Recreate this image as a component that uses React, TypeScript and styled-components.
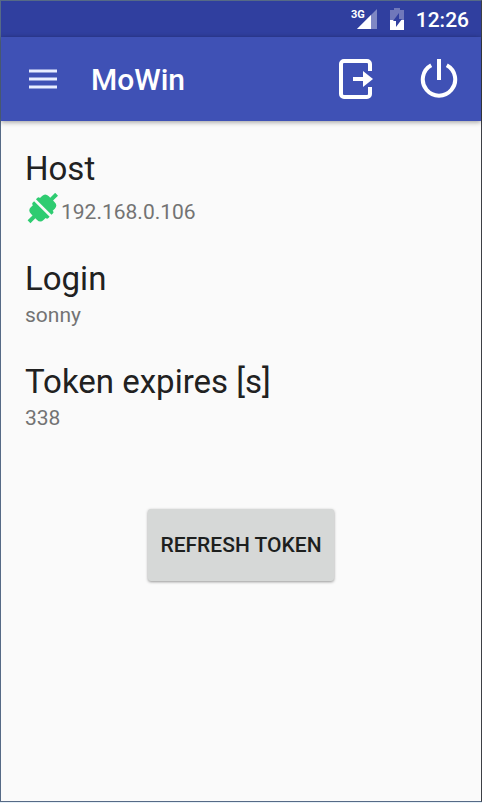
import React from "react";
import styled, { createGlobalStyle } from "styled-components";

const GlobalStyle = createGlobalStyle`
  *, *::before, *::after { box-sizing: border-box; }
  body { margin: 0; background: #e6f0f8; font-family: Roboto, sans-serif; }
`;

const Screen = styled.div`
  display: flex;
  flex-direction: column;
  min-height: calc(100vh - 1px);
  background: #fafafa;
  border: 1px solid #566a86;
  border-right-color: #3d3f45;
`;

const StatusBar = styled.div`
  display: flex;
  align-items: center;
  justify-content: flex-end;
  height: 36px;
  padding-right: 12px;
  background: #303f9f;
  color: #fff;
`;

const Signal = styled.div`
  display: flex;
  align-items: flex-start;
  margin-right: 12px;
`;

const Battery = styled.svg`
  margin-right: 12px;
`;

const Clock = styled.time`
  padding-top: 2px;
  font-size: 21px;
  font-weight: 500;
  line-height: 24px;
`;

const AppBar = styled.header`
  display: flex;
  align-items: center;
  height: 84px;
  padding: 0 14px 0 16px;
  background: #3f51b5;
  color: #fff;
  box-shadow: 0 1px 5px rgba(0, 0, 0, 0.4);
`;

const IconButton = styled.button`
  display: grid;
  place-items: center;
  width: 56px;
  height: 56px;
  padding: 0;
  border: 0;
  background: none;
  color: inherit;
  cursor: pointer;
`;

const MenuButton = styled(IconButton)`
  width: 52px;
`;

const AppTitle = styled.h1`
  flex: 1;
  margin: 0 0 0 22px;
  padding-top: 2px;
  font-size: 30px;
  font-weight: 500;
  line-height: 36px;
`;

const Actions = styled.div`
  display: flex;
  gap: 27px;
`;

const Content = styled.main`
  display: flex;
  flex-direction: column;
  padding: 28px 24px;
`;

const Details = styled.dl`
  display: flex;
  flex-direction: column;
  gap: 35px;
  margin: 0;
`;

const Label = styled.dt`
  color: #212121;
  font-size: 33px;
  line-height: 39px;
`;

const Value = styled.dd`
  display: flex;
  align-items: flex-end;
  gap: 1px;
  margin: 5px 0 0;
  color: #737373;
  font-size: 21px;
  line-height: 24px;
`;

const RefreshButton = styled.button`
  align-self: center;
  height: 72px;
  margin-top: 79px;
  padding: 0 12px;
  border: 0;
  border-radius: 3px;
  background: #d6d8d7;
  color: #1d1f1e;
  font: 500 21px/24px Roboto, sans-serif;
  text-transform: uppercase;
  box-shadow: 0 1px 3px rgba(0, 0, 0, 0.4);
  cursor: pointer;
`;

const SignalIcon = () => (
  <svg width="27" height="22" viewBox="0 0 27 22" role="img" aria-label="3G signal">
    <path d="M6 21 26 1V21Z" fill="#7f88c4" />
    <path d="M6 21 20 7V21Z" fill="#fff" />
    <text x="0" y="10" fill="#fff" fontFamily="Roboto, sans-serif" fontSize="11" fontWeight="700">3G</text>
  </svg>
);

const BatteryIcon = () => (
  <Battery width="14" height="22" viewBox="0 0 14 22" role="img" aria-label="Battery charging">
    <path d="M4 0h6v2h4v20H0V2h4Z" fill="#7078ba" />
    <path d="M0 12h14v10H0Z" fill="#fff" />
    <path d="M9 5 3 13h3v6l6-8H9Z" fill="#303f9f" />
  </Battery>
);

const MenuIcon = () => (
  <svg width="28" height="20" viewBox="0 0 28 20" aria-hidden="true">
    <path d="M0 2h28M0 10h28M0 18h28" stroke="#e8edff" strokeWidth="3" />
  </svg>
);

const LogoutIcon = () => (
  <svg width="36" height="42" viewBox="0 0 36 42" aria-hidden="true">
    <path d="M32 13V6a3 3 0 0 0-3-3H6a3 3 0 0 0-3 3v30a3 3 0 0 0 3 3h23a3 3 0 0 0 3-3v-7" fill="none" stroke="#fff" strokeWidth="4" />
    <path d="M15 19h10v-6L35 21l-10 8v-6H15Z" fill="#fff" stroke="#3f51b5" strokeWidth="2" paintOrder="stroke" />
  </svg>
);

const PowerIcon = () => (
  <svg width="38" height="42" viewBox="0 0 38 42" aria-hidden="true">
    <path d="M11.2 7.3A16.2 16.2 0 1 0 26.8 7.3" fill="none" stroke="#fff" strokeWidth="4" />
    <path d="M19 1v21" stroke="#fff" strokeWidth="4" />
  </svg>
);

const PlugIcon = () => (
  <svg width="35" height="31" viewBox="0 0 35 31" role="img" aria-label="Connected">
    <g fill="#2ecc71" transform="translate(17.8 15) rotate(45)">
      <path d="M-11-1.3h22v-2.2q0-1.5-2-1.5v-3q0-4.5-5-4.5H2v-7h-4v7h-2q-5 0-5 4.5v3q-2 0-2 1.5Z" />
      <path d="M-11 1.3h22v2.2q0 1.5-2 1.5v3q0 4.5-5 4.5H2v7h-4v-7h-2q-5 0-5-4.5V5q-2 0-2-1.5Z" />
    </g>
  </svg>
);

interface DetailProps {
  label: string;
  value: string;
  icon?: React.ReactNode;
}

const Detail = ({ label, value, icon }: DetailProps) => (
  <div>
    <Label>{label}</Label>
    <Value>{icon}<span>{value}</span></Value>
  </div>
);

export default function App() {
  return (
    <>
      <GlobalStyle />
      <Screen>
        <StatusBar>
          <Signal><SignalIcon /></Signal>
          <BatteryIcon />
          <Clock>12:26</Clock>
        </StatusBar>
        <AppBar>
          <MenuButton type="button" aria-label="Open menu"><MenuIcon /></MenuButton>
          <AppTitle>MoWin</AppTitle>
          <Actions>
            <IconButton type="button" aria-label="Log out"><LogoutIcon /></IconButton>
            <IconButton type="button" aria-label="Power"><PowerIcon /></IconButton>
          </Actions>
        </AppBar>
        <Content>
          <Details>
            <Detail label="Host" value="192.168.0.106" icon={<PlugIcon />} />
            <Detail label="Login" value="sonny" />
            <Detail label="Token expires [s]" value="338" />
          </Details>
          <RefreshButton type="button">Refresh token</RefreshButton>
        </Content>
      </Screen>
    </>
  );
}
